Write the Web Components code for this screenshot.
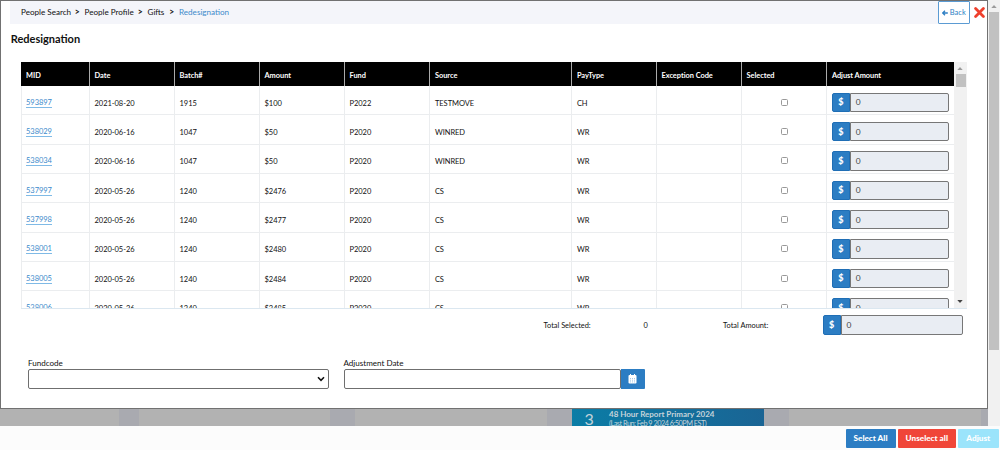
<!DOCTYPE html>
<html lang="en">
<head>
<meta charset="utf-8">
<title>Redesignation</title>
<style>
html,body{margin:0;height:450px;overflow:hidden;background:#fff;font-family:Lato,sans-serif;color:#111}
</style>
</head>
<body>
<redesignation-page></redesignation-page>
<script>
const define = (name, render) => customElements.define(name, class extends HTMLElement {
  constructor() {
    super();
    this.attachShadow({ mode: 'open' });
  }
  connectedCallback() {
    const t = document.createElement('template');
    t.innerHTML = render(this);
    this.shadowRoot.replaceChildren(t.content.cloneNode(true));
  }
});

define('crumb-trail', () => `
<style>
:host{display:flex;align-items:center;width:928px;height:23px;box-sizing:border-box;padding:0 0 1px 11px;background:#f4f5fa;font-size:8.1px;line-height:12px;white-space:pre}
span{display:block}.a{width:49px}.s{width:14.5px;text-align:center;font-size:8.6px;font-weight:700}.b{width:48.5px}.c{width:17px}.d{color:#3d8acb}
</style>
<span class="a">People Search</span><span class="s">&gt;</span><span class="b">People Profile</span><span class="s">&gt;</span><span class="c">Gifts</span><span class="s">&gt;</span><span class="d">Redesignation</span>`);

define('back-button', () => `
<style>
:host{display:flex;align-items:center;justify-content:center;gap:1.5px;box-sizing:border-box;width:32px;height:23px;border:1px solid #5b9bd3;border-radius:1px;background:#fff;color:#2e7fc4;font-size:7.5px;line-height:12px}
svg{display:block}
</style>
<svg width="6" height="6" viewBox="0 0 6 6"><path d="M5.8 3H.9M3 .7.7 3 3 5.3" fill="none" stroke="#2e7fc4" stroke-width="1.3"/></svg><span>Back</span>`);

define('close-icon', () => `
<style>:host{display:block;width:11px;height:11px}svg{display:block}</style>
<svg width="11" height="11" viewBox="0 0 11 11"><path d="M1.6 1.6 9.4 9.4M9.4 1.6 1.6 9.4" stroke="#ef402d" stroke-width="2.8" stroke-linecap="round"/></svg>`);

define('scroll-bar', el => `
<style>
:host{display:flex;flex-direction:column;box-sizing:border-box;background:#f1f1f1}
svg{display:block;flex:none}i{display:block;background:#c1c1c1;flex:none}b{flex:1}
</style>
<svg width="12" height="12" viewBox="0 0 12 12"><path d="M3.3 8h5.4L6 5z" fill="#9b9b9b"/></svg>
<i style="height:${el.getAttribute('thumb')}px;margin:0 1px 0 ${el.hasAttribute('down') ? 2 : 1}px"></i><b></b>
${el.hasAttribute('down') ? '<svg width="12" height="12" viewBox="0 0 12 12"><path d="M3.3 4h5.4L6 7z" fill="#444"/></svg>' : ''}`);

define('money-input', () => `
<style>
:host{display:flex;box-sizing:border-box;height:19.5px;font-size:8.4px;line-height:12px}
b{display:flex;align-items:center;justify-content:center;box-sizing:border-box;width:18px;background:#2c7dc3;border:1px solid #1f6eb5;border-radius:2px 0 0 2px;color:#fff;font-size:9px;font-weight:900}
span{display:flex;align-items:center;flex:1;box-sizing:border-box;padding-left:5px;background:#e9edf3;border:1px solid #777;border-radius:0 2px 2px 0;color:#444}
</style><b>$</b><span>0</span>`);

define('check-box', () => `<style>:host{display:block;box-sizing:border-box;width:7px;height:7px;border:1px solid #999;border-radius:1.5px;background:#fff}</style>`);

const cols = ['MID', 'Date', 'Batch#', 'Amount', 'Fund', 'Source', 'PayType', 'Exception Code', 'Selected', 'Adjust Amount'];
const rows = [
  ['593897', '2021-08-20', '1915', '$100', 'P2022', 'TESTMOVE', 'CH'],
  ['538029', '2020-06-16', '1047', '$50', 'P2020', 'WINRED', 'WR'],
  ['538034', '2020-06-16', '1047', '$50', 'P2020', 'WINRED', 'WR'],
  ['537997', '2020-05-26', '1240', '$2476', 'P2020', 'CS', 'WR'],
  ['537998', '2020-05-26', '1240', '$2477', 'P2020', 'CS', 'WR'],
  ['538001', '2020-05-26', '1240', '$2480', 'P2020', 'CS', 'WR'],
  ['538005', '2020-05-26', '1240', '$2484', 'P2020', 'CS', 'WR'],
  ['538006', '2020-05-26', '1240', '$2485', 'P2020', 'CS', 'WR']
];

define('gift-grid', () => `
<style>
:host{display:flex;box-sizing:border-box;width:946px;height:247px;overflow:hidden;border-bottom:1px solid #dbe7f0}
.t{width:933px}
.r{display:grid;grid-template-columns:68px 85px 85px 85px 85.4px 142px 84.6px 85px 85.4px 127.6px;height:29.35px}
.r>div{display:flex;align-items:center;box-sizing:border-box;padding:7px 0 0 4.5px;border-left:1px solid #ebedef;border-bottom:1px solid #ebedef;font-size:7.5px;line-height:12px;letter-spacing:-.03px;color:#111;white-space:nowrap}
.r>div:first-child{padding:6px 0 0 4px}
.h{height:24px}
.r.h>div{background:#000;border-bottom:0;color:#fff;font-weight:700;font-size:7.4px;padding-top:3px;border-color:#aaa;letter-spacing:-.02px}
.r.h>div:first-child{border-color:#000}
a{color:#3d8acb;border-bottom:1px solid #7fbae6;line-height:9px;font-size:7.5px;margin-top:-1px}
.r>.k{justify-content:center;padding:4px 0 0}
.r>.m{padding:4.2px 4.5px 0 4.4px}
money-input{flex:1}
scroll-bar{width:13px}
</style>
<div class="t"><div class="r h">${cols.map(c => `<div>${c}</div>`).join('')}</div>
${rows.map(r => `<div class="r">${r.map((c, i) => i ? `<div>${c}</div>` : `<div><a>${c}</a></div>`).join('')}<div></div><div class="k"><check-box></check-box></div><div class="m"><money-input></money-input></div></div>`).join('')}</div>
<scroll-bar thumb="13" down></scroll-bar>`);

define('form-field', el => `
<style>
:host{display:block;width:301px;font-size:8.05px;line-height:12px}
.b{display:flex;margin-top:.6px;height:19.4px}
.i{display:flex;align-items:center;justify-content:flex-end;flex:1;box-sizing:border-box;border:1px solid #6f6f6f;border-radius:2px;background:#fff;padding-right:3px}
.d{display:flex;align-items:center;justify-content:center;width:24px;background:#2c7dc3;border-radius:0 1px 1px 0}
svg{display:block}
</style>
<slot></slot>
<div class="b">${el.getAttribute('kind') === 'select'
  ? '<div class="i"><svg width="8" height="6" viewBox="0 0 8 6"><path d="m1 1.3 3 3 3-3" fill="none" stroke="#111" stroke-width="1.6"/></svg></div>'
  : '<div class="i"></div><div class="d"><svg width="9" height="10" viewBox="0 0 9 10"><path d="M.5 2Q.5 1 1.5 1H2V0h1v1h3V0h1v1h.5q1 0 1 1v6.7q0 .8-1 .8h-6q-1 0-1-.8z" fill="#fff"/><path d="M2 4.5h1M4 4.5h1M6 4.5h1M2 6.2h1M4 6.2h1M6 6.2h1M2 7.9h1M4 7.9h1M6 7.9h1" stroke="#83b3de" stroke-width=".7"/></svg></div>'}</div>`);

define('totals-row', () => `
<style>
:host{display:grid;grid-template-columns:100px 79.5px 99.5px 140.5px;height:19.5px;align-items:center;font-size:7.4px;line-height:12px}
span{padding-top:1.5px}
</style><span>Total Selected:</span><span>0</span><span>Total Amount:</span><money-input></money-input>`);

define('modal-panel', () => `
<style>
:host{display:block;box-sizing:border-box;width:988px;height:409px;border:1px solid #717171;background:#fff}
header{display:flex;align-items:center;padding-left:9px;height:23px}
back-button{margin-right:4px}
h1{margin:7px 0 0 9.7px;font-size:11px;line-height:16px;font-weight:700;color:#111}
gift-grid{margin:15px 0 0 20px}
totals-row{margin:6px 0 0 542.6px}
.f{display:flex;gap:14.5px;margin:22.3px 0 0 27px}
</style>
<header><crumb-trail></crumb-trail><back-button></back-button><close-icon></close-icon></header>
<h1>Redesignation</h1>
<gift-grid></gift-grid>
<totals-row></totals-row>
<div class="f"><form-field kind="select">Fundcode</form-field><form-field kind="date">Adjustment Date</form-field></div>`);

define('report-card', () => `
<style>
:host{display:flex;box-sizing:border-box;height:17px;overflow:hidden;background:linear-gradient(90deg,#0b7da6,#1a6494);color:#c5d3da;white-space:nowrap}
.n{width:37px;padding-left:12.5px;box-sizing:border-box;font-size:16px;line-height:20px}
.x{font-size:8px;font-weight:700;line-height:10px}.y{font-size:7.3px;line-height:10px;letter-spacing:-.5px}
</style><div class="n">3</div><div><div class="x">48 Hour Report Primary 2024</div><div class="y">(Last Run: Feb 9 2024 6:50PM EST)</div></div>`);

define('dimmed-dashboard', () => `
<style>
:host{display:grid;grid-template-columns:119px 20px 191px 25px 192px 25px 192px 25px 192px 7px;height:17px;background:#a9aab0;overflow:hidden}
i{background:#b2b2b2}
</style><i></i><b></b><i></i><b></b><i></i><b></b><report-card></report-card><b></b><i></i><b></b>`);

define('action-button', () => `
<style>
:host{display:flex;align-items:center;justify-content:center;box-sizing:border-box;height:19.5px;border-radius:1px;color:#fff;font-size:8.2px;line-height:12px;font-weight:900;white-space:nowrap}
</style><slot></slot>`);

define('action-bar', () => `
<style>
:host{display:flex;justify-content:flex-end;gap:2px;box-sizing:border-box;height:24px;padding:2.5px 1.5px 0 0;background:#fcfcfc}
.s{width:50px;background:#2c7dc3}.u{width:58.5px;background:#f04638}.a{width:40.5px;background:#9be4fb}
</style>
<action-button class="s">Select All</action-button><action-button class="u">Unselect all</action-button><action-button class="a">Adjust</action-button>`);

define('redesignation-page', () => `
<style>
:host{display:block;width:1000px;height:450px;overflow:hidden}
.w{display:flex;height:426px}
scroll-bar{width:12px}
</style>
<div class="w"><div><modal-panel></modal-panel><dimmed-dashboard></dimmed-dashboard></div><scroll-bar thumb="338"></scroll-bar></div>
<action-bar></action-bar>`);
</script>
</body>
</html>
